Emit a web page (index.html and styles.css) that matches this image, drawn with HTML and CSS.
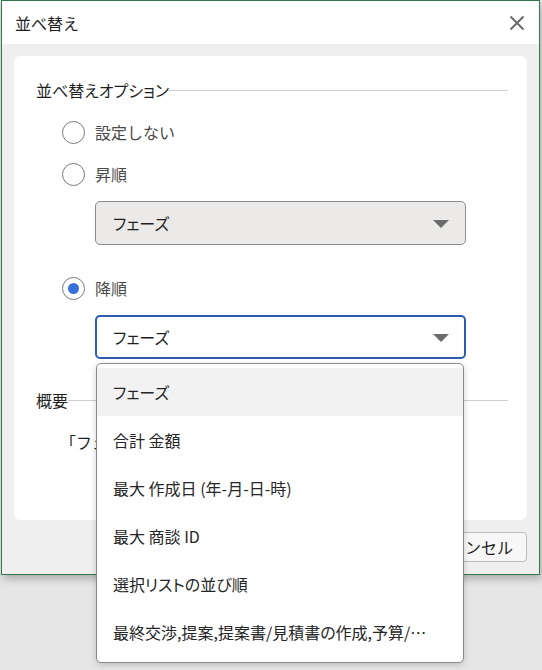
FILE: index.html
```html
<!DOCTYPE html>
<html lang="ja">
<head>
<meta charset="utf-8">
<link rel="stylesheet" href="styles.css">
</head>
<body>
<div class="dialog">
  <div class="titlebar">
    <span class="title">並べ替え</span>
    <svg class="close" width="16" height="16" viewBox="0 0 16 16"><path d="M1.5 1.5 L14.5 14.5 M14.5 1.5 L1.5 14.5" stroke="#6b6b6b" stroke-width="2" fill="none"/></svg>
  </div>
  <div class="body">
    <div class="card">
      <div class="legend"><span>並べ替えオプション</span><span class="rule"></span></div>
      <div class="radio-row first"><span class="radio"></span><span class="rlabel">設定しない</span></div>
      <div class="radio-row"><span class="radio"></span><span class="rlabel">昇順</span></div>
      <div class="select disabled"><span>フェーズ</span><span class="arrow"></span></div>
      <div class="radio-row gap"><span class="radio checked"></span><span class="rlabel">降順</span></div>
      <div class="select-wrap">
        <div class="select active"><span>フェーズ</span><span class="arrow"></span></div>
        <ul class="menu">
          <li class="hover">フェーズ</li>
          <li>合計 金額</li>
          <li>最大 作成日 (年-月-日-時)</li>
          <li>最大 商談 ID</li>
          <li>選択リストの並び順</li>
          <li>最終交渉,提案,提案書/見積書の作成,予算/…</li>
        </ul>
      </div>
      <div class="legend summary-legend"><span>概要</span><span class="rule"></span></div>
      <div class="summary">「フェーズ」の降順で並べ替えます。</div>
    </div>
    <div class="footer">
      <button class="btn">OK</button>
      <button class="btn">キャンセル</button>
    </div>
  </div>
</div>
</body>
</html>
```
FILE: styles.css
```css
html, body {
  margin: 0;
  padding: 0;
}
body {
  background: #e6e6e6;
  font-family: "Noto Sans CJK JP", "Noto Sans", sans-serif;
  width: 542px;
  height: 670px;
  overflow: hidden;
}
.dialog {
  margin-left: 1px;
  width: 539px;
  box-sizing: border-box;
  border: 1px solid #2f7a4a;
  background: #efefef;
  box-shadow: 2px 4px 8px rgba(0,0,0,0.25);
}
.titlebar {
  height: 43px;
  background: #fff;
  display: flex;
  align-items: center;
  justify-content: space-between;
  padding: 0 14px 0 13px;
}
.title {
  font-size: 16px;
  color: #1f1f1f;
  line-height: 20px;
  margin-top: 1px;
}
.close {
  display: block;
  margin-top: 1px;
}
.body {
  padding: 12px;
}
.card {
  background: #fff;
  border-radius: 6px;
  height: 464px;
  box-sizing: border-box;
  padding: 22px 19px 0 22px;
}
.legend {
  display: flex;
  align-items: center;
  height: 24px;
  font-size: 16px;
  color: #1f1f1f;
  font-feature-settings: "palt";
}
.legend .rule {
  flex: 1;
  height: 1px;
  background: #cfcfcf;
  margin-top: 1px;
}
.radio-row {
  display: flex;
  align-items: center;
  height: 42px;
  padding-left: 26px;
}
.radio-row.first {
  margin-top: 9px;
}
.radio-row.gap {
  margin-top: 22px;
}
.radio {
  border: 1px solid #7a7a7a;
  border-radius: 50%;
  box-sizing: border-box;
  width: 23px;
  height: 23px;
  position: relative;
  background: #fff;
}
.radio.checked::after {
  content: "";
  position: absolute;
  left: 5px;
  top: 5px;
  width: 11px;
  height: 11px;
  border-radius: 50%;
  background: #3a6fd8;
}
.rlabel {
  margin-left: 10px;
  font-size: 16px;
  color: #4a4a4a;
}
.select {
  margin-left: 59px;
  width: 371px;
  height: 44px;
  box-sizing: border-box;
  border: 1px solid #8c8c8c;
  border-radius: 5px;
  display: flex;
  align-items: center;
  justify-content: space-between;
  padding: 0 16px 0 17px;
  font-size: 16px;
  color: #1f1f1f;
  margin-top: 6px;
  font-feature-settings: "palt";
}
.select.disabled {
  background: #ebeae8;
}
.select.active {
  border: 2px solid #2d5db3;
  background: #fff;
  padding-left: 16px;
  padding-right: 15px;
  margin-top: 0;
}
.arrow {
  width: 0;
  height: 0;
  border-left: 8px solid transparent;
  border-right: 8px solid transparent;
  border-top: 8px solid #6b6b6b;
  margin-top: 2px;
}
.select-wrap {
  position: relative;
  margin-top: 6px;
}
.menu {
  position: absolute;
  left: 60px;
  top: 48px;
  width: 368px;
  height: 300px;
  box-sizing: border-box;
  margin: 0;
  padding: 4px 0 0 0;
  list-style: none;
  background: #fff;
  border: 1px solid #8a8a8a;
  border-radius: 5px;
  box-shadow: 0 2px 6px rgba(0,0,0,0.18);
  z-index: 5;
}
.menu li {
  height: 48px;
  display: flex;
  align-items: center;
  padding-left: 16px;
  font-size: 16px;
  color: #262626;
  white-space: nowrap;
  font-feature-settings: "palt";
}
.menu li.hover {
  background: #f2f2f2;
}
.summary-legend {
  margin-top: 29px;
}
.summary {
  margin-top: 18px;
  padding-left: 24px;
  line-height: 24px;
  height: 24px;
  font-size: 16px;
  color: #1f1f1f;
  white-space: nowrap;
}
.footer {
  display: flex;
  justify-content: flex-end;
  gap: 8px;
  margin-top: 12px;
}
.btn {
  height: 30px;
  box-sizing: border-box;
  border: 1px solid #bcbcbc;
  border-radius: 4px;
  background: #f7f7f7;
  font-family: "Noto Sans CJK JP", "Noto Sans", sans-serif;
  font-size: 16px;
  color: #1f1f1f;
  padding: 0 13px;
  line-height: 26px;
}
```
